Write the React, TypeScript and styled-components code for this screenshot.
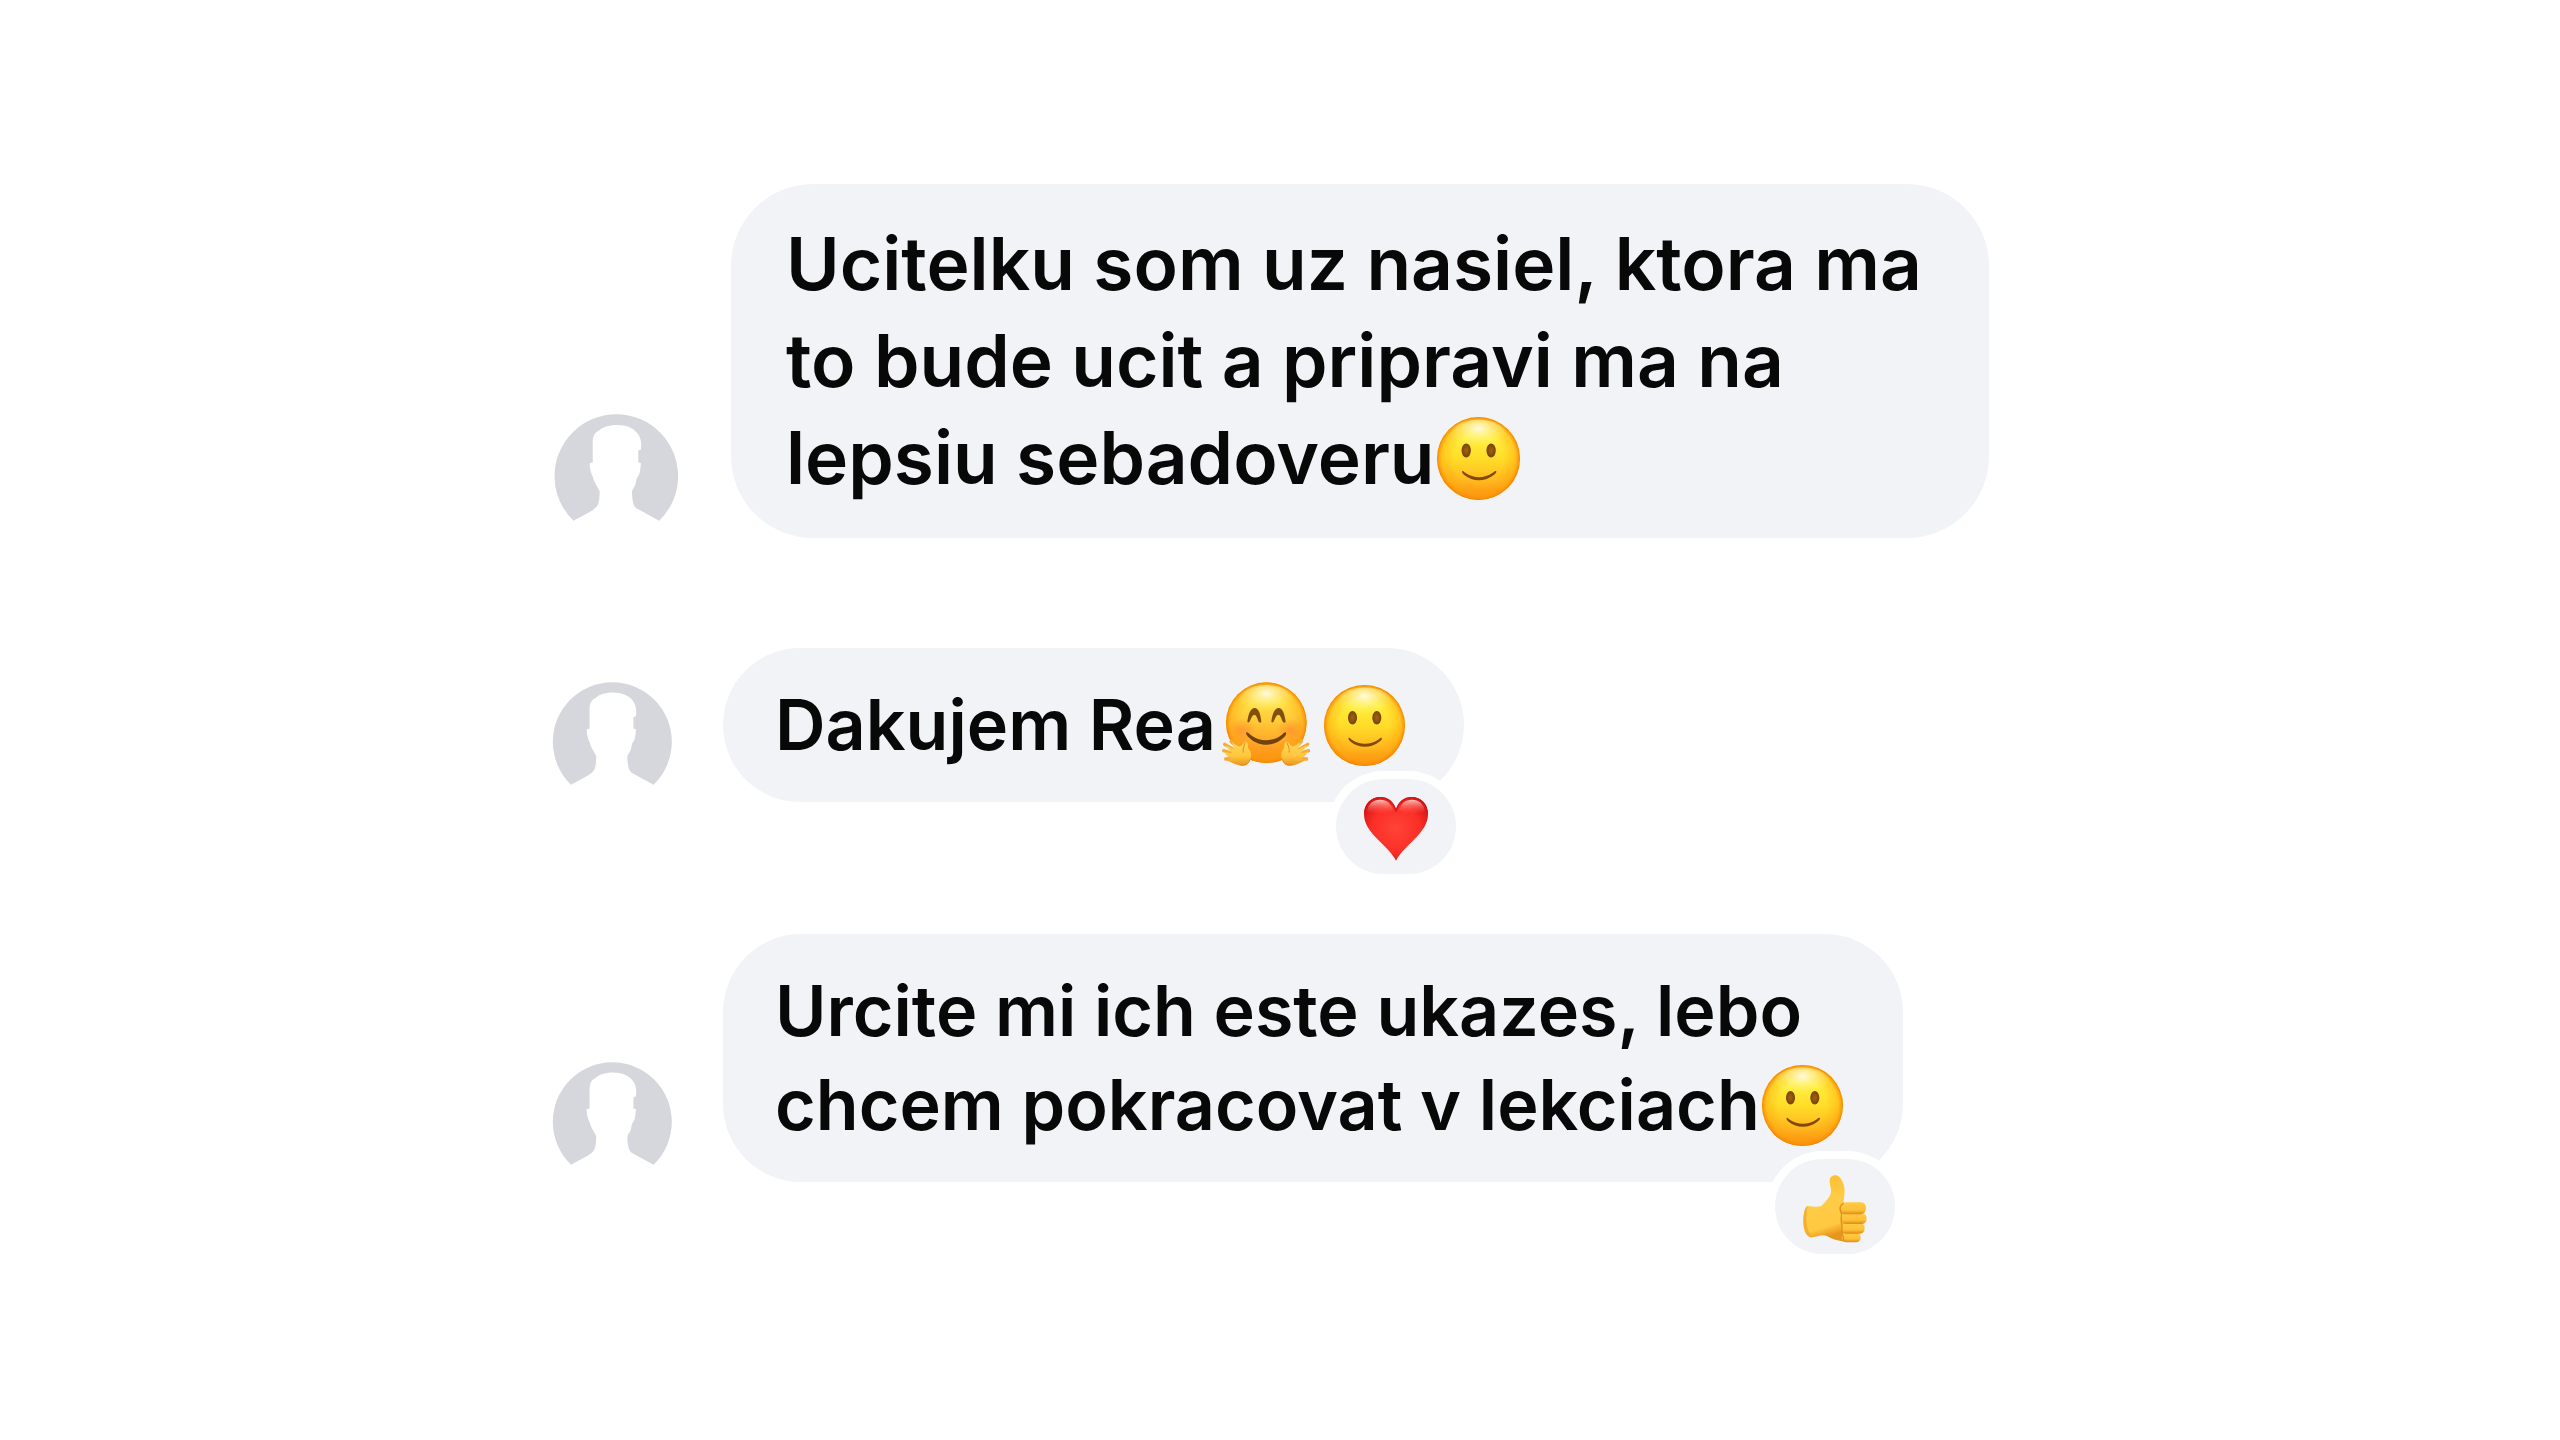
import React from "react";
import styled, { createGlobalStyle, css } from "styled-components";

type Size = "regular" | "large";

const GlobalStyle = createGlobalStyle`
  * { box-sizing: border-box; }
  body {
    margin: 0;
    background: #ffffff;
    color: #080809;
    font-family: Inter, "Liberation Sans", sans-serif;
  }
`;

const Thread = styled.main`
  max-width: 1456px;
  margin: 0 auto;
  padding: 184px 0;
`;

const MessageList = styled.ol`
  display: flex;
  flex-direction: column;
  margin: 0;
  padding: 0;
  list-style: none;
`;

const Message = styled.li<{ $size: Size; $spaceBelow: number }>`
  display: flex;
  align-items: flex-end;
  gap: ${({ $size }) => ($size === "large" ? 53 : 51)}px;
  padding-left: ${({ $size }) => ($size === "large" ? 2 : 0)}px;
  margin-bottom: ${({ $spaceBelow }) => $spaceBelow}px;
`;

const AvatarImage = styled.svg<{ $size: Size }>`
  flex: none;
  width: ${({ $size }) => ($size === "large" ? 124 : 120)}px;
  height: ${({ $size }) => ($size === "large" ? 107 : 103)}px;
  margin-bottom: 17px;
  fill: #d5d7dc;
`;

const Bubble = styled.div<{ $size: Size }>`
  position: relative;
  background: #f1f3f7;
  font-weight: 600;
  ${({ $size }) =>
    $size === "large"
      ? css`
          max-width: 1258px;
          padding: 31px 55px 32px;
          border-radius: 82px;
          font-size: 73px;
          line-height: 97px;
        `
      : css`
          min-width: 741px;
          max-width: 1180px;
          padding: 30px 52px;
          border-radius: 78px;
          font-size: 70px;
          line-height: 94px;
        `}
`;

const Text = styled.p`
  margin: 0;
`;

const Emoji = styled.svg<{ $width: number; $height: number; $gap: number; $drop: number }>`
  display: inline-block;
  width: ${({ $width }) => $width}px;
  height: ${({ $height }) => $height}px;
  margin-left: ${({ $gap }) => $gap}px;
  vertical-align: -${({ $drop }) => $drop}px;
`;

const Reaction = styled.button`
  position: absolute;
  right: 8px;
  bottom: -72px;
  display: flex;
  align-items: center;
  justify-content: center;
  width: 120px;
  height: 95px;
  padding: 4px 0 0;
  border: 0;
  border-radius: 48px;
  background: #f1f3f7;
  box-shadow: 0 0 0 8px #ffffff;
  cursor: pointer;
`;

const ReactionIcon = styled.svg`
  width: 68px;
  height: 68px;
`;

function Avatar({ size }: { size: Size }) {
  return (
    <AvatarImage $size={size} viewBox="72 71 372 322" role="img" aria-label="Profile picture">
      <path d="M130 392A186 186 0 1 1 388 392L325 358C310 350 308 338 306 310C306 300 308 297 314 289C319 281 318 272 321 263C330 254 331 240 333 219L325 216V181L333 178C335 160 333 146 327 136C317 116 292 104 262 104C236 104 216 111 207 121C191 128 187 142 188 165V216L179 219C178 234 183 250 189 262C193 280 204 291 209 304C208 322 208 337 201 348C197 355 188 361 180 365Z" />
    </AvatarImage>
  );
}

// Shared shading of the round yellow faces
function FaceShade({ id, blush }: { id: string; blush?: boolean }) {
  return (
    <defs>
      <linearGradient id={`${id}-base`} x1="0" y1="0" x2="0" y2="1">
        <stop offset="0" stopColor="#ffe94a" />
        <stop offset="0.25" stopColor={blush ? "#ffe045" : "#ffee3c"} />
        <stop offset="0.5" stopColor={blush ? "#ffc736" : "#ffdd29"} />
        <stop offset="0.78" stopColor={blush ? "#ffa226" : "#ffb71e"} />
        <stop offset="1" stopColor="#f98d10" />
      </linearGradient>
      <radialGradient id={`${id}-rim`} cx="0.5" cy="0.5" r="0.5">
        <stop offset="0.6" stopColor="#ff9d0a" stopOpacity="0" />
        <stop offset="0.88" stopColor="#ff9d0a" stopOpacity="0.4" />
        <stop offset="0.96" stopColor="#fb9006" stopOpacity="0.8" />
        <stop offset="1" stopColor="#ee8200" stopOpacity="1" />
      </radialGradient>
      <radialGradient id={`${id}-shine`} cx="0.5" cy="0.25" r="0.55">
        <stop offset="0" stopColor="#fffde8" stopOpacity="0.95" />
        <stop offset="1" stopColor="#fff26a" stopOpacity="0" />
      </radialGradient>
      <radialGradient id={`${id}-blush`}>
        <stop offset="0" stopColor="#ff7a2a" stopOpacity="0.5" />
        <stop offset="1" stopColor="#ff7a2a" stopOpacity="0" />
      </radialGradient>
      <radialGradient id={`${id}-eye`}>
        <stop offset="0" stopColor="#a5620f" />
        <stop offset="1" stopColor="#76430a" />
      </radialGradient>
      <linearGradient id={`${id}-hand`} x1="0" y1="0" x2="0" y2="1">
        <stop offset="0" stopColor="#ffd95a" />
        <stop offset="0.6" stopColor="#ffc63c" />
        <stop offset="1" stopColor="#ec9320" />
      </linearGradient>
    </defs>
  );
}

function Smile({ id, size, gap }: { id: string; size: number; gap: number }) {
  return (
    <Emoji $width={size} $height={size} $gap={gap} $drop={16} viewBox="0 0 250 250" role="img" aria-label="🙂">
      <FaceShade id={id} />
      <circle cx="125" cy="125" r="125" fill={`url(#${id}-base)`} />
      <circle cx="125" cy="125" r="125" fill={`url(#${id}-rim)`} />
      <ellipse cx="125" cy="60" rx="88" ry="52" fill={`url(#${id}-shine)`} />
      <ellipse cx="88" cy="101" rx="14" ry="21" fill={`url(#${id}-eye)`} />
      <ellipse cx="163" cy="101" rx="14" ry="21" fill={`url(#${id}-eye)`} />
      <path d="M76 163C74 168 78 171 82 175C108 196 144 196 171 175C176 171 181 167 178 163C175 161 172 165 168 168C142 186 111 186 85 168C81 165 78 161 76 163Z" fill="#82490a" />
    </Emoji>
  );
}

function Hand({ id }: { id: string }) {
  return (
    <g>
      <g fill="none" stroke="#f6ab38" strokeWidth="10" strokeLinecap="round">
        <path d="M121 247L142 268" />
        <path d="M102 256L136 276" />
        <path d="M99 275L132 286" />
        <path d="M105 300L134 297" />
      </g>
      <path
        d="M124 251C134 257 142 262 149 262C155 259 159 250 165 248C172 250 172 258 172 267C181 276 184 289 179 301C175 314 167 321 155 320C138 319 124 312 108 304C116 302 121 301 124 299C114 296 105 286 100 278C111 280 118 282 124 282C116 274 108 266 104 259C115 264 123 268 132 272C131 265 126 258 124 251Z"
        fill={`url(#${id}-hand)`}
      />
      <path d="M164 251C158 266 156 272 158 281M178 302C173 316 162 320 146 317" fill="none" stroke="#e58e1b" strokeWidth="3" />
    </g>
  );
}

function Hug({ id, gap }: { id: string; gap: number }) {
  return (
    <Emoji $width={88} $height={86} $gap={gap} $drop={17} viewBox="94 66 264 258" role="img" aria-label="🤗">
      <FaceShade id={id} blush />
      <circle cx="227" cy="191" r="121" fill={`url(#${id}-base)`} />
      <circle cx="227" cy="191" r="121" fill={`url(#${id}-rim)`} />
      <ellipse cx="227" cy="128" rx="84" ry="50" fill={`url(#${id}-shine)`} />
      <ellipse cx="155" cy="212" rx="42" ry="34" fill={`url(#${id}-blush)`} />
      <ellipse cx="299" cy="212" rx="42" ry="34" fill={`url(#${id}-blush)`} />
      <path d="M170 189C173 162 181 147 192 147C203 147 210 163 212 189C208 193 205 190 203 186C199 174 196 167 191 167C186 167 182 174 178 186C176 190 173 192 170 189Z" fill="#81500f" />
      <path d="M242 189C245 162 253 147 264 147C275 147 282 163 285 189C281 193 278 190 275 186C271 174 268 167 263 167C258 167 254 174 250 186C248 190 245 192 242 189Z" fill="#81500f" />
      <path d="M167 220C165 226 169 230 173 234C203 265 251 265 281 234C285 230 288 225 286 221C283 218 279 223 274 227C245 249 208 249 179 227C174 223 170 218 167 220Z" fill="#71430d" />
      <Hand id={id} />
      <g transform="matrix(-1 0 0 1 453 0)">
        <Hand id={id} />
      </g>
    </Emoji>
  );
}

function Heart() {
  return (
    <ReactionIcon viewBox="517 404 204 204" aria-hidden="true">
      <defs>
        <radialGradient id="heart-base" cx="0.5" cy="0.5" r="0.62">
          <stop offset="0" stopColor="#ff4337" />
          <stop offset="0.6" stopColor="#fb2f27" />
          <stop offset="1" stopColor="#cf1013" />
        </radialGradient>
        <linearGradient id="heart-shine" x1="0" y1="0" x2="0" y2="1">
          <stop offset="0" stopColor="#ffd5cc" stopOpacity="0.9" />
          <stop offset="1" stopColor="#ff5a4c" stopOpacity="0" />
        </linearGradient>
      </defs>
      <path d="M619 601C607 578 586 559 566 539C539 512 523 490 523 461C523 431 544 410 572 410C594 410 611 422 619 446C627 422 644 410 666 410C694 410 715 431 715 461C715 490 699 512 672 539C652 559 631 578 619 601Z" fill="url(#heart-base)" />
      <path d="M525 461C525 432 545 412 572 412C594 412 610 425 619 451C628 425 644 412 666 412C693 412 713 432 713 461" fill="none" stroke="#d5161a" strokeWidth="4" />
      <path d="M533 452C535 431 550 418 572 418C591 418 604 430 610 450C590 462 552 464 533 452Z" fill="url(#heart-shine)" />
      <path d="M705 452C703 431 688 418 666 418C647 418 634 430 628 450C648 462 686 464 705 452Z" fill="url(#heart-shine)" />
    </ReactionIcon>
  );
}

function ThumbUp() {
  return (
    <ReactionIcon viewBox="213 403 204 204" aria-hidden="true">
      <defs>
        <linearGradient id="thumb-base" x1="0" y1="0" x2="0.2" y2="1">
          <stop offset="0" stopColor="#fdbb2c" />
          <stop offset="0.5" stopColor="#ffcc48" />
          <stop offset="0.85" stopColor="#ffc83f" />
          <stop offset="1" stopColor="#e8951c" />
        </linearGradient>
        <linearGradient id="thumb-finger" x1="0" y1="0" x2="0" y2="1">
          <stop offset="0" stopColor="#ffcb42" />
          <stop offset="0.65" stopColor="#fdc038" />
          <stop offset="1" stopColor="#dd8a17" />
        </linearGradient>
      </defs>
      <path d="M299 420C299 409 308 404 317 404C329 405 338 420 342 436C346 452 342 466 341 487L350 500V602C334 602 316 599 302 592C293 587 286 583 276 584C265 586 251 591 241 590C226 585 219 562 220 539C220 520 225 497 233 496C247 497 260 500 274 496C286 484 301 469 303 455C304 442 299 432 299 420Z" fill="url(#thumb-base)" />
      <path d="M241 590C226 585 219 562 220 539C220 520 225 497 233 496C227 520 226 566 245 587Z" fill="#f0a52b" opacity="0.7" />
      <rect x="335" y="575" width="57" height="30" rx="14" fill="url(#thumb-finger)" />
      <rect x="333" y="547" width="71" height="32" rx="15" fill="url(#thumb-finger)" />
      <rect x="332" y="517" width="78" height="33" rx="16" fill="url(#thumb-finger)" />
      <path d="M349 485H392C414 485 414 520 392 521H346C333 521 326 512 330 502C332 492 339 486 349 485Z" fill="url(#thumb-finger)" />
      <path d="M341 487C331 493 328 504 333 515C338 526 330 536 335 549C339 560 332 570 338 583C341 592 339 598 342 602" fill="none" stroke="#dd9020" strokeWidth="4" />
    </ReactionIcon>
  );
}

export default function App() {
  return (
    <>
      <GlobalStyle />
      <Thread>
        <MessageList>
          <Message $size="large" $spaceBelow={110}>
            <Avatar size="large" />
            <Bubble $size="large">
              <Text>
                Ucitelku som uz nasiel, ktora ma to bude ucit a pripravi ma na lepsiu sebadoveru
                <Smile id="smile-a" size={83} gap={2} />
              </Text>
            </Bubble>
          </Message>
          <Message $size="regular" $spaceBelow={132}>
            <Avatar size="regular" />
            <Bubble $size="regular">
              <Text>
                Dakujem Rea
                <Hug id="hug" gap={6} />
                <Smile id="smile-b" size={81} gap={14} />
              </Text>
              <Reaction type="button" aria-label="Heart reaction">
                <Heart />
              </Reaction>
            </Bubble>
          </Message>
          <Message $size="regular" $spaceBelow={0}>
            <Avatar size="regular" />
            <Bubble $size="regular">
              <Text>
                Urcite mi ich este ukazes, lebo chcem pokracovat v lekciach
                <Smile id="smile-c" size={81} gap={2} />
              </Text>
              <Reaction type="button" aria-label="Thumbs up reaction">
                <ThumbUp />
              </Reaction>
            </Bubble>
          </Message>
        </MessageList>
      </Thread>
    </>
  );
}
